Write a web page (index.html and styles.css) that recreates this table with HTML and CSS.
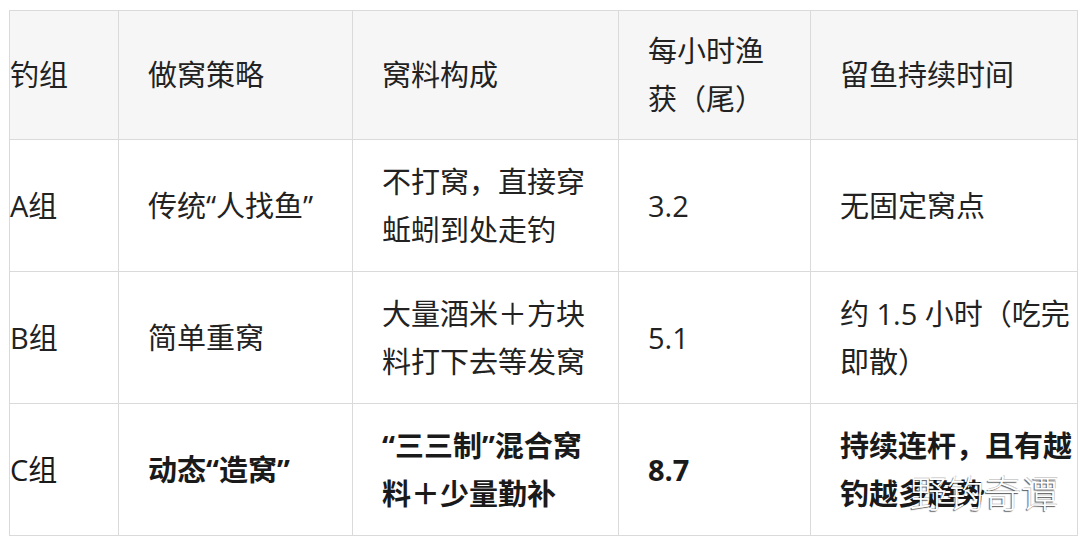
FILE: index.html
```html
<!DOCTYPE html>
<html lang="zh-CN">
<head>
<meta charset="utf-8">
<title>做窝策略对比</title>
<link rel="stylesheet" href="styles.css">
</head>
<body>
<div class="page">
  <table class="grid">
    <colgroup>
      <col class="c1"><col class="c2"><col class="c3"><col class="c4"><col class="c5">
    </colgroup>
    <thead>
      <tr class="head">
        <th class="first">钓组</th>
        <th>做窝策略</th>
        <th>窝料构成</th>
        <th>每小时渔获（尾）</th>
        <th>留鱼持续时间</th>
      </tr>
    </thead>
    <tbody>
      <tr>
        <td class="first">A组</td>
        <td>传统“人找鱼”</td>
        <td>不打窝，直接穿蚯蚓到处走钓</td>
        <td>3.2</td>
        <td>无固定窝点</td>
      </tr>
      <tr>
        <td class="first">B组</td>
        <td>简单重窝</td>
        <td>大量酒米＋方块料打下去等发窝</td>
        <td>5.1</td>
        <td>约 1.5 小时（吃完即散）</td>
      </tr>
      <tr class="strong">
        <td class="first">C组</td>
        <td>动态“造窝”</td>
        <td>“三三制”混合窝料＋少量勤补</td>
        <td>8.7</td>
        <td>持续连杆，且有越钓越多趋势</td>
      </tr>
    </tbody>
  </table>
  <div class="mark">野钓奇谭</div>
</div>
</body>
</html>
```
FILE: styles.css
```css
html, body {
  margin: 0;
  padding: 0;
  background: #ffffff;
}
.page {
  position: relative;
  width: 1080px;
  height: 540px;
  overflow: hidden;
  padding: 10px 0 0 9px;
  box-sizing: border-box;
}
.grid {
  border-collapse: collapse;
  table-layout: fixed;
  width: 1068px;
  font-family: "Open Sans", "Noto Sans CJK SC", sans-serif;
  font-size: 29px;
  line-height: 48px;
  color: #222222;
}
.c1 { width: 109px; }
.c2 { width: 234px; }
.c3 { width: 266px; }
.c4 { width: 192px; }
.c5 { width: 267px; }
.grid th, .grid td {
  border: 1px solid #dadada;
  padding: 0 0 0 29px;
  text-align: left;
  vertical-align: middle;
  font-weight: normal;
  overflow: visible;
}
.grid th.first, .grid td.first {
  padding-left: 0;
}
.grid td:nth-child(3) { padding-right: 22px; }
.grid td:nth-child(4), .grid th:nth-child(4) { padding-right: 30px; }
.head th {
  height: 128px;
  background: #f6f6f6;
  color: #222222;
}
.grid tbody td {
  height: 131px;
}
.strong td {
  font-weight: bold;
  color: #1a1a1a;
}
.strong td.first {
  font-weight: normal;
}
.mark {
  position: absolute;
  left: 910px;
  top: 470px;
  font-family: "Noto Sans CJK SC", sans-serif;
  font-weight: 300;
  font-size: 37px;
  line-height: 44px;
  color: #ffffff;
  text-shadow: -1px 1px 1px rgba(0, 0, 0, 0.65), 1px -1px 0 rgba(0, 0, 0, 0.2);
}
```
